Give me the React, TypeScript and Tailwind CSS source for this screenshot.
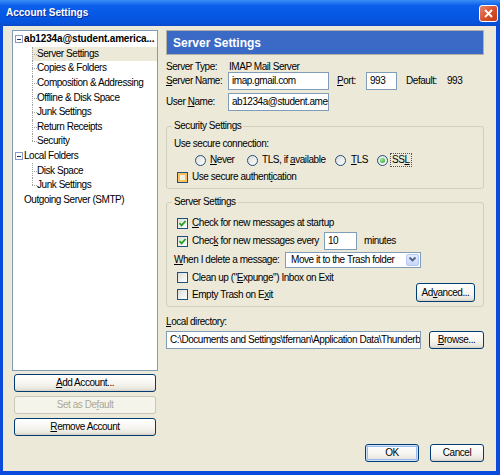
import React from "react";

type Node = { label: string; kind: "root" | "child" | "leaf"; bold?: boolean; last?: boolean; selected?: boolean };

const tree: Node[] = [
  { label: "ab1234a@student.america...", kind: "root", bold: true },
  { label: "Server Settings", kind: "child", selected: true },
  { label: "Copies & Folders", kind: "child" },
  { label: "Composition & Addressing", kind: "child" },
  { label: "Offline & Disk Space", kind: "child" },
  { label: "Junk Settings", kind: "child" },
  { label: "Return Receipts", kind: "child" },
  { label: "Security", kind: "child", last: true },
  { label: "Local Folders", kind: "root" },
  { label: "Disk Space", kind: "child" },
  { label: "Junk Settings", kind: "child", last: true },
  { label: "Outgoing Server (SMTP)", kind: "leaf" },
];

function U({ children }: { children: React.ReactNode }) {
  return <span className="underline decoration-1 underline-offset-[1px]">{children}</span>;
}

function Check({ checked, hover }: { checked?: boolean; hover?: boolean }) {
  return (
    <div className="flex h-[11px] w-[11px] shrink-0 items-center justify-center border border-[#1C5180] bg-[linear-gradient(135deg,#DCDCD7_0%,#FFFFFF_100%)]">
      {hover && <div className="h-full w-full border-2 border-[#F9C25A] bg-[#F3F1E6]" />}
      {checked && (
        <svg width="9" height="9" viewBox="0 0 9 9">
          <path d="M1.5 4.2 L3.6 6.4 L7.6 2" fill="none" stroke="#21A121" strokeWidth="1.8" />
        </svg>
      )}
    </div>
  );
}

function Radio({ checked }: { checked?: boolean }) {
  return (
    <div className="flex h-[11px] w-[11px] shrink-0 items-center justify-center rounded-full border border-[#1C5180] bg-[linear-gradient(135deg,#DCDCD7_0%,#FFFFFF_100%)]">
      {checked && <div className="h-[5px] w-[5px] rounded-full bg-[radial-gradient(circle_at_35%_35%,#9CEB9C,#21A121)]" />}
    </div>
  );
}

function Btn({
  children,
  className = "",
  disabled,
  primary,
}: {
  children: React.ReactNode;
  className?: string;
  disabled?: boolean;
  primary?: boolean;
}) {
  return (
    <div
      className={`flex items-center justify-center rounded-[3px] border ${
        disabled
          ? "border-[#C9C7BA] bg-[#F5F4EA] text-[#ACA899]"
          : "border-[#003C74] bg-[linear-gradient(180deg,#FFFFFF_0%,#F6F5F0_55%,#E9E7DF_85%,#D6D0C5_100%)]"
      } ${primary ? "shadow-[inset_0_0_0_1px_#CEE1FC,inset_0_0_0_2px_#9DB9EB]" : ""} ${className}`}
    >
      {children}
    </div>
  );
}

function TreeRow({ node }: { node: Node }) {
  if (node.kind === "child") {
    return (
      <div className="flex h-[14.6px]">
        <div className="w-[19px] shrink-0" />
        <div className={`flex flex-1 items-center ${node.selected ? "bg-[#ECE9D8]" : ""}`}>
          <div className="relative h-full w-[5px] shrink-0">
            <div className={`absolute left-0 top-0 border-l border-dotted border-[#A0A0A0] ${node.last ? "h-1/2" : "h-full"}`} />
            <div className="absolute left-0 top-1/2 w-[5px] border-t border-dotted border-[#A0A0A0]" />
          </div>
          <span className="whitespace-nowrap">{node.label}</span>
        </div>
      </div>
    );
  }
  return (
    <div className="flex h-[14.6px] items-center">
      {node.kind === "root" ? (
        <div className="ml-[2px] mr-[1px] flex h-[8px] w-[8px] shrink-0 items-center justify-center border border-[#8A99C8] bg-white">
          <div className="h-px w-[4px] bg-[#1E2F6E]" />
        </div>
      ) : (
        <div className="w-[11px] shrink-0" />
      )}
      <span className={`whitespace-nowrap ${node.bold ? "font-bold tracking-[-0.15px]" : ""}`}>{node.label}</span>
    </div>
  );
}

function Field({ className = "", children }: { className?: string; children: React.ReactNode }) {
  return (
    <div className={`flex h-[18px] min-w-0 items-center overflow-hidden whitespace-nowrap border border-[#7F9DB9] bg-white pl-[3px] ${className}`}>
      {children}
    </div>
  );
}

export default function App() {
  return (
    <div className="flex h-[475px] w-[500px] flex-col overflow-hidden bg-white font-['Liberation_Sans',Arial,sans-serif] text-[10px] leading-none tracking-[-0.45px] text-black">
      {/* title bar */}
      <div className="flex h-[26px] shrink-0 items-center justify-between bg-[linear-gradient(180deg,#3D8DF5_0%,#0A5EEB_22%,#0558E4_60%,#0652DC_88%,#0A48C9_100%)] pl-[6px] pr-[2px]">
        <span className="text-[10px] font-bold tracking-normal text-white [text-shadow:1px_1px_0_#0F2E9E]">Account Settings</span>
        <div className="flex h-[17px] w-[19px] items-center justify-center rounded-[3px] border border-white bg-[linear-gradient(135deg,#E9866A_0%,#D9522F_50%,#C23C17_100%)]">
          <svg width="9" height="9" viewBox="0 0 9 9">
            <path d="M1 1 L8 8 M8 1 L1 8" stroke="white" strokeWidth="1.8" />
          </svg>
        </div>
      </div>

      <div className="flex min-h-0 flex-1 gap-[8px] border-b-[4px] border-l-[3px] border-r-[4px] border-[#0A4BDC] bg-[#ECE9D8] pb-[9px] pl-[9px] pr-[12px] pt-[4px]">
        {/* left column */}
        <div className="flex w-[146px] shrink-0 flex-col">
          <div className="h-[341px] border border-[#7F9DB9] bg-white pt-[1px]">
            {tree.map((n, i) => (
              <TreeRow key={i} node={n} />
            ))}
          </div>
          <Btn className="mx-[2px] mt-[3px] h-[18px]">
            <span>
              <U>A</U>dd Account...
            </span>
          </Btn>
          <Btn disabled className="mx-[2px] mt-[4px] h-[18px]">
            <span>
              Set as De<U>f</U>ault
            </span>
          </Btn>
          <Btn className="mx-[2px] mt-[4px] h-[18px]">
            <span>
              <U>R</U>emove Account
            </span>
          </Btn>
        </div>

        {/* right column */}
        <div className="flex min-w-0 flex-1 flex-col">
          <div className="flex h-[25px] shrink-0 items-center border border-[#B4B1A4] bg-[#3A6AC6] pl-[6px] text-[12px] font-bold tracking-normal text-white">
            Server Settings
          </div>

          <div className="mt-[6px] flex h-[11px] items-center">
            <span className="w-[62px] shrink-0">Server Type:</span>
            <span className="ml-[1px]">IMAP Mail Server</span>
          </div>
          <div className="flex h-[18px] items-center">
            <span className="w-[62px] shrink-0">
              <U>S</U>erver Name:
            </span>
            <Field className="w-[101px] shrink-0">imap.gmail.com</Field>
            <span className="ml-[8px] w-[29px] shrink-0">
              <U>P</U>ort:
            </span>
            <Field className="w-[31px] shrink-0">993</Field>
            <span className="ml-[9px] w-[41px] shrink-0">Default:</span>
            <span>993</span>
          </div>
          <div className="mt-[3px] flex h-[18px] items-center">
            <span className="w-[62px] shrink-0">
              User <U>N</U>ame:
            </span>
            <Field className="w-[101px] shrink-0">ab1234a@student.amer</Field>
          </div>

          {/* security settings */}
          <fieldset className="mt-[9px] min-w-0 rounded-[3px] border border-[#D0D0BF] pb-[4px] pl-[7px] pr-[7px]">
            <legend className="-ml-[2px] px-[2px] leading-[12px]">Security Settings</legend>
            <div className="mt-[6px] flex h-[12px] items-center">Use secure connection:</div>
            <div className="mt-[3px] flex h-[14px] items-center pl-[21px]">
              <div className="flex w-[52px] items-center gap-[4px]">
                <Radio />
                <span>
                  <U>N</U>ever
                </span>
              </div>
              <div className="flex w-[88px] items-center gap-[4px]">
                <Radio />
                <span>
                  TLS, if <U>a</U>vailable
                </span>
              </div>
              <div className="flex w-[42px] items-center gap-[5px]">
                <Radio />
                <span>
                  <U>T</U>LS
                </span>
              </div>
              <div className="flex items-center gap-[2px]">
                <Radio checked />
                <span className="border border-dotted border-[#555] px-[1px] py-[1px]">
                  SS<U>L</U>
                </span>
              </div>
            </div>
            <div className="mt-[3px] flex h-[14px] items-center pl-[3px]">
              <Check hover />
              <span className="ml-[4px]">
                Use secure authent<U>i</U>cation
              </span>
            </div>
          </fieldset>

          {/* server settings */}
          <fieldset className="mt-[7px] min-w-0 rounded-[3px] border border-[#D0D0BF] pb-[3px] pl-[7px] pr-[7px]">
            <legend className="-ml-[2px] px-[2px] leading-[12px]">Server Settings</legend>
            <div className="mt-[6px] flex h-[18px] items-center pl-[3px]">
              <Check checked />
              <span className="ml-[4px]">
                <U>C</U>heck for new messages at startup
              </span>
            </div>
            <div className="flex h-[18px] items-center pl-[3px]">
              <Check checked />
              <span className="ml-[4px] w-[132px] shrink-0">
                Chec<U>k</U> for new messages every
              </span>
              <Field className="h-[17px] w-[33px] shrink-0">10</Field>
              <span className="ml-[7px]">minutes</span>
            </div>
            <div className="flex h-[19px] items-center">
              <span className="w-[111px] shrink-0">
                <U>W</U>hen I delete a message:
              </span>
              <div className="flex h-[16px] w-[136px] shrink-0 items-center border border-[#7F9DB9] bg-white p-[1px]">
                <span className="flex-1 whitespace-nowrap pl-[4px]">Move it to the Trash folder</span>
                <div className="flex h-full w-[13px] items-center justify-center rounded-[2px] border border-[#B7C9F2] bg-[linear-gradient(180deg,#E4ECFD_0%,#C6D6FA_100%)]">
                  <svg width="9" height="7" viewBox="0 0 9 7">
                    <path d="M1.5 1.5 L4.5 4.5 L7.5 1.5" fill="none" stroke="#4D6185" strokeWidth="1.8" />
                  </svg>
                </div>
              </div>
            </div>
            <div className="flex">
              <div className="flex min-w-0 flex-1 flex-col">
                <div className="flex h-[17px] items-center pl-[3px]">
                  <Check />
                  <span className="ml-[4px]">
                    Clean up ("<U>E</U>xpunge") Inbox on Exit
                  </span>
                </div>
                <div className="flex h-[17px] items-center pl-[3px]">
                  <Check />
                  <span className="ml-[4px]">
                    Empty Trash on E<U>x</U>it
                  </span>
                </div>
              </div>
              <Btn className="mb-[1px] mr-[1px] h-[19px] w-[59px] shrink-0 self-end">
                <span>
                  Ad<U>v</U>anced...
                </span>
              </Btn>
            </div>
          </fieldset>

          <div className="mt-[9px] flex h-[12px] items-center">
            <span>
              <U>L</U>ocal directory:
            </span>
          </div>
          <div className="mt-[3px] flex h-[18px] items-center gap-[8px]">
            <Field className="h-[17px] flex-1 bg-[#FBFBF9]">C:\Documents and Settings\tfernan\Application Data\Thunderbi</Field>
            <Btn className="h-[18px] w-[55px] shrink-0">
              <span>
                <U>B</U>rowse...
              </span>
            </Btn>
          </div>

          <div className="mt-auto flex justify-end gap-[11px]">
            <Btn primary className="h-[18px] w-[54px]">
              OK
            </Btn>
            <Btn className="h-[18px] w-[54px]">Cancel</Btn>
          </div>
        </div>
      </div>
    </div>
  );
}
